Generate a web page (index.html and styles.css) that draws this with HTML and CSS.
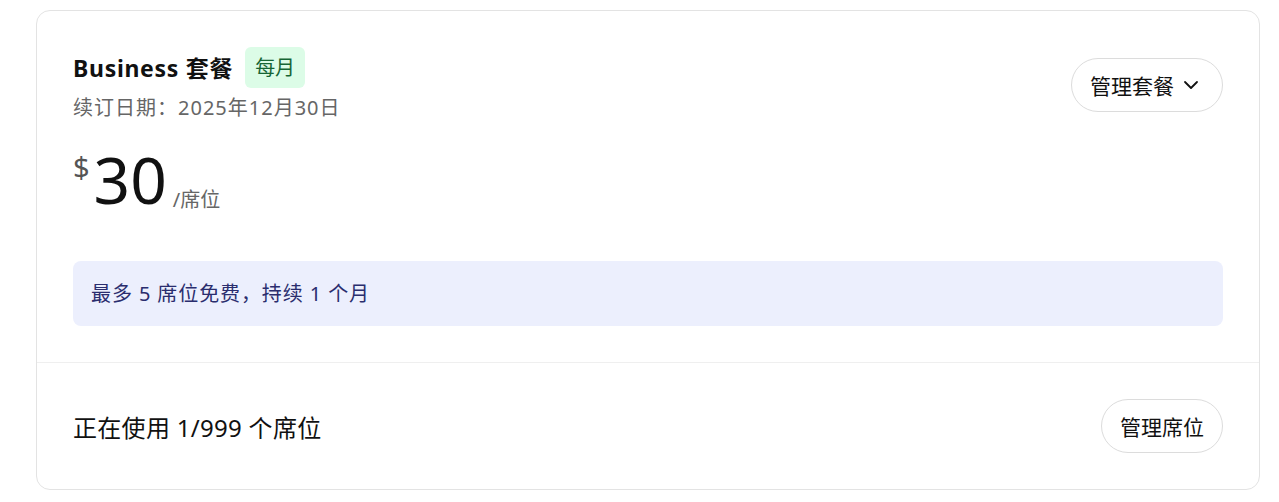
FILE: index.html
```html
<!DOCTYPE html>
<html lang="zh-CN">
<head>
<meta charset="utf-8">
<title>Business 套餐</title>
<link rel="stylesheet" href="styles.css">
</head>
<body>
<div class="page">
  <section class="card">
    <div class="plan">
      <div class="plan-head">
        <div class="plan-info">
          <div class="title-row">
            <h2 class="title">Business 套餐</h2>
            <span class="badge">每月</span>
          </div>
          <div class="renew">续订日期：2025年12月30日</div>
        </div>
        <button class="btn btn-plan">管理套餐
          <svg class="chev" width="16" height="16" viewBox="0 0 16 16" fill="none"><path d="M2 5l6 6 6-6" stroke="#111" stroke-width="1.8" stroke-linecap="round" stroke-linejoin="round"/></svg>
        </button>
      </div>
      <div class="price">
        <span class="cur">$</span><span class="amount">30</span><span class="unit">/席位</span>
      </div>
      <div class="notice">最多 5 席位免费，持续 1 个月</div>
    </div>
    <div class="seats">
      <div class="seats-text">正在使用 1/999 个席位</div>
      <button class="btn btn-seats">管理席位</button>
    </div>
  </section>
</div>
</body>
</html>
```

FILE: styles.css
```css
* { box-sizing: border-box; }
html, body { margin: 0; padding: 0; background: #fff; }
body {
  font-family: "Noto Sans", "Noto Sans CJK SC", sans-serif;
  color: #111;
}
.page { padding: 10px 19px 0 36px; }
.card {
  border: 1px solid #e3e3e3;
  border-radius: 14px;
  background: #fff;
}
.plan { padding: 36px 36px 36px 36px; border-bottom: 1px solid #efefef; }
.plan-head { display: flex; justify-content: space-between; align-items: center; }
.title-row { display: flex; align-items: center; gap: 12px; }
.title { margin: 0; font-size: 23px; font-weight: 700; line-height: 32px; letter-spacing: 0.7px; }
.badge {
  background: #dcfce7;
  color: #166534;
  font-size: 20px;
  line-height: 41px;
  padding: 0 10px;
  border-radius: 6px;
}
.renew { color: #666; font-size: 20px; line-height: 30px; margin-top: 5px; letter-spacing: 1px; }
.btn {
  font-family: inherit;
  background: #fff;
  border: 1px solid #dcdcdc;
  border-radius: 999px;
  color: #111;
  font-size: 21px;
  height: 54px;
  padding: 0 18px;
  display: inline-flex;
  align-items: center;
  cursor: pointer;
}
.btn-plan { gap: 9px; padding-right: 23px; }
.chev { display: block; }
.price { display: flex; align-items: flex-start; margin-top: 26px; height: 62px; }
.cur { font-size: 29px; color: #555; line-height: 36px; }
.amount { font-size: 64px; line-height: 62px; margin-left: 4px; }
.unit { font-size: 20px; color: #666; align-self: flex-end; margin-left: 6px; line-height: 22px; }
.notice {
  margin-top: 50px;
  background: #eceffd;
  color: #2a2d6e;
  border-radius: 8px;
  font-size: 20px;
  line-height: 65px;
  padding: 0 18px;
  letter-spacing: 0.9px;
}
.seats { display: flex; justify-content: space-between; align-items: center; padding: 36px 36px 36px 36px; }
.seats-text { font-size: 24px; letter-spacing: 0.3px; }
```
